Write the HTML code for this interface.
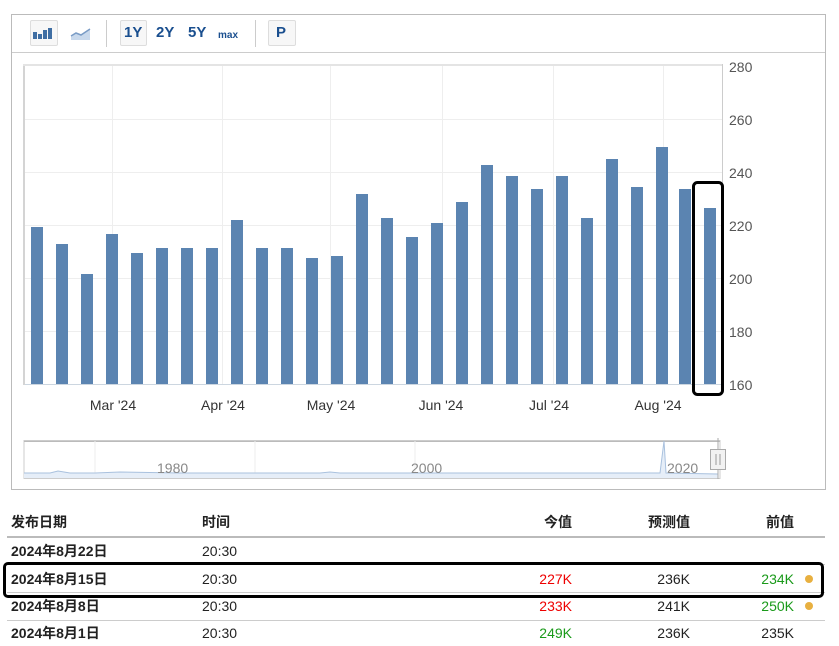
<!DOCTYPE html>
<html><head><meta charset="utf-8"><style>
body{margin:0;width:839px;height:646px;background:#fff;font-family:"Liberation Sans","Noto Sans CJK SC",sans-serif;position:relative;overflow:hidden}
.a{position:absolute}
.btn{position:absolute;top:20px;height:26px;border:1px solid #ddd;border-radius:2px;background:#f7f7f7;box-sizing:border-box}
.t{position:absolute;font-size:14px;line-height:16px;color:#222;white-space:nowrap}
.b{font-weight:bold}
.r{text-align:right}
</style></head><body>
<div class="a" style="left:11px;top:14px;width:815px;height:476px;border:1px solid #bbb;box-sizing:border-box"></div>
<div class="a" style="left:12px;top:52px;width:813px;height:1px;background:#ccc"></div>
<div class="btn" style="left:30px;width:28px"></div>
<svg class="a" style="left:33px;top:26px" width="22" height="14"><rect x="0" y="6" width="4" height="7" fill="#3f6ea3"/><rect x="5" y="8" width="4" height="5" fill="#3f6ea3"/><rect x="10" y="4" width="4" height="9" fill="#3f6ea3"/><rect x="15" y="2" width="4" height="11" fill="#3f6ea3"/></svg>
<svg class="a" style="left:70px;top:26px" width="22" height="16"><path d="M1 14 L1 10 L6 7 L11 9 L20 3 L20 14Z" fill="#c9d9ec"/><path d="M1 10 L6 7 L11 9 L20 3" stroke="#7a9cc6" stroke-width="1.5" fill="none"/></svg>
<div class="a" style="left:106px;top:20px;width:1px;height:27px;background:#ccc"></div>
<div class="btn" style="left:120px;width:27px"></div>
<div class="t b" style="left:124px;top:25px;font-size:15px;color:#1a4f8f">1Y</div>
<div class="t b" style="left:156px;top:25px;font-size:15px;color:#1a4f8f">2Y</div>
<div class="t b" style="left:188px;top:25px;font-size:15px;color:#1a4f8f">5Y</div>
<div class="t b" style="left:218px;top:28px;font-size:10px;color:#1a4f8f">max</div>
<div class="a" style="left:255px;top:20px;width:1px;height:27px;background:#ccc"></div>
<div class="btn" style="left:268px;width:28px"></div>
<div class="t b" style="left:276px;top:25px;font-size:15px;color:#1a4f8f">P</div>
<svg class="a" style="left:0;top:0" width="839" height="490">
<rect x="23" y="64" width="2" height="321" fill="#d4d4d4"/>
<rect x="23" y="64" width="699" height="2" fill="#e4e4e4"/>
<g stroke="#eee" stroke-width="1">
<line x1="25" y1="119.5" x2="722" y2="119.5"/><line x1="25" y1="172.5" x2="722" y2="172.5"/><line x1="25" y1="225.5" x2="722" y2="225.5"/><line x1="25" y1="278.5" x2="722" y2="278.5"/><line x1="25" y1="331.5" x2="722" y2="331.5"/>
<line x1="112.5" y1="66" x2="112.5" y2="384"/><line x1="222.5" y1="66" x2="222.5" y2="384"/><line x1="330.5" y1="66" x2="330.5" y2="384"/><line x1="442.5" y1="66" x2="442.5" y2="384"/><line x1="553.5" y1="66" x2="553.5" y2="384"/><line x1="663.5" y1="66" x2="663.5" y2="384"/>
</g>
<line x1="722.5" y1="64" x2="722.5" y2="385" stroke="#ccc"/>
<line x1="25" y1="384.5" x2="722" y2="384.5" stroke="#ccd6e0"/>
<g fill="#5b84b1">
<rect x="31" y="227" width="12" height="157"/><rect x="56" y="244" width="12" height="140"/><rect x="81" y="274" width="12" height="110"/><rect x="106" y="234" width="12" height="150"/><rect x="131" y="253" width="12" height="131"/><rect x="156" y="248" width="12" height="136"/><rect x="181" y="248" width="12" height="136"/><rect x="206" y="248" width="12" height="136"/><rect x="231" y="220" width="12" height="164"/><rect x="256" y="248" width="12" height="136"/><rect x="281" y="248" width="12" height="136"/><rect x="306" y="258" width="12" height="126"/><rect x="331" y="256" width="12" height="128"/><rect x="356" y="194" width="12" height="190"/><rect x="381" y="218" width="12" height="166"/><rect x="406" y="237" width="12" height="147"/><rect x="431" y="223" width="12" height="161"/><rect x="456" y="202" width="12" height="182"/><rect x="481" y="165" width="12" height="219"/><rect x="506" y="176" width="12" height="208"/><rect x="531" y="189" width="12" height="195"/><rect x="556" y="176" width="12" height="208"/><rect x="581" y="218" width="12" height="166"/><rect x="606" y="159" width="12" height="225"/><rect x="631" y="187" width="12" height="197"/><rect x="656" y="147" width="12" height="237"/><rect x="679" y="189" width="12" height="195"/><rect x="704" y="208" width="12" height="176"/>
</g>
<rect x="693.5" y="182.5" width="29" height="212" rx="4" fill="none" stroke="#000" stroke-width="3"/>
<g font-size="14" fill="#555" font-family="Liberation Sans">
<text x="729" y="72">280</text><text x="729" y="125">260</text><text x="729" y="178">240</text><text x="729" y="231">220</text><text x="729" y="284">200</text><text x="729" y="337">180</text><text x="729" y="390">160</text>
</g>
<g font-size="14" fill="#333" font-family="Liberation Sans" text-anchor="middle">
<text x="113" y="410">Mar '24</text><text x="223" y="410">Apr '24</text><text x="331" y="410">May '24</text><text x="441" y="410">Jun '24</text><text x="549" y="410">Jul '24</text><text x="658" y="410">Aug '24</text>
</g>
<rect x="24" y="440.5" width="696" height="38" fill="none" stroke="#ccc"/>
<rect x="24" y="441" width="696" height="1" fill="#bbb"/>
<g stroke="#eee"><line x1="95" y1="441" x2="95" y2="478"/><line x1="255" y1="441" x2="255" y2="478"/><line x1="415" y1="441" x2="415" y2="478"/></g>
<path d="M24 473 L50 473 L58 471 L70 473 L95 473 L120 472 L180 473 L320 473 L330 472 L340 473 L420 473 L500 473 L660 473 L664 441 L666 473 L718 474 L718 478 L24 478Z" fill="#e6eef8"/>
<path d="M24 473 L50 473 L58 471 L70 473 L95 473 L120 472 L180 473 L320 473 L330 472 L340 473 L420 473 L500 473 L660 473 L664 441 L666 473 L718 474" stroke="#a9c1de" fill="none"/>
<g font-size="14" fill="#888" font-family="Liberation Sans"><text x="157" y="473">1980</text><text x="411" y="473">2000</text><text x="667" y="473">2020</text></g>
<line x1="718" y1="438" x2="718" y2="479" stroke="#aaa"/>
<rect x="710.5" y="449.5" width="15" height="20" fill="#f2f2f2" stroke="#aaa"/>
<line x1="716" y1="454" x2="716" y2="465" stroke="#999"/><line x1="720" y1="454" x2="720" y2="465" stroke="#999"/>
</svg>
<div class="t b" style="left:11px;top:514px">发布日期</div>
<div class="t b" style="left:202px;top:514px">时间</div>
<div class="t b r" style="left:472px;width:100px;top:514px">今值</div>
<div class="t b r" style="left:590px;width:100px;top:514px">预测值</div>
<div class="t b r" style="left:694px;width:100px;top:514px">前值</div>
<div class="a" style="left:7px;top:536px;width:818px;height:2px;background:#bbb"></div>
<div class="t b" style="left:11px;top:543px">2024年8月22日</div><div class="t" style="left:202px;top:543px">20:30</div>
<div class="a" style="left:7px;top:564px;width:818px;height:1px;background:#ccc"></div>
<div class="t b" style="left:11px;top:571px">2024年8月15日</div><div class="t" style="left:202px;top:571px">20:30</div>
<div class="t r" style="left:472px;width:100px;top:571px;color:#e00">227K</div><div class="t r" style="left:590px;width:100px;top:571px">236K</div><div class="t r" style="left:694px;width:100px;top:571px;color:#1a9a1a">234K</div>
<div class="a" style="left:805px;top:575px;width:8px;height:8px;border-radius:50%;background:#e8b040"></div>
<div class="a" style="left:7px;top:592px;width:818px;height:1px;background:#ccc"></div>
<div class="t b" style="left:11px;top:598px">2024年8月8日</div><div class="t" style="left:202px;top:598px">20:30</div>
<div class="t r" style="left:472px;width:100px;top:598px;color:#e00">233K</div><div class="t r" style="left:590px;width:100px;top:598px">241K</div><div class="t r" style="left:694px;width:100px;top:598px;color:#1a9a1a">250K</div>
<div class="a" style="left:805px;top:602px;width:8px;height:8px;border-radius:50%;background:#e8b040"></div>
<div class="a" style="left:7px;top:620px;width:818px;height:1px;background:#ccc"></div>
<div class="t b" style="left:11px;top:625px">2024年8月1日</div><div class="t" style="left:202px;top:625px">20:30</div>
<div class="t r" style="left:472px;width:100px;top:625px;color:#1a9a1a">249K</div><div class="t r" style="left:590px;width:100px;top:625px">236K</div><div class="t r" style="left:694px;width:100px;top:625px">235K</div>
<div class="a" style="left:3px;top:562px;width:821px;height:36px;border:3px solid #000;border-radius:5px;box-sizing:border-box"></div>
</body></html>
